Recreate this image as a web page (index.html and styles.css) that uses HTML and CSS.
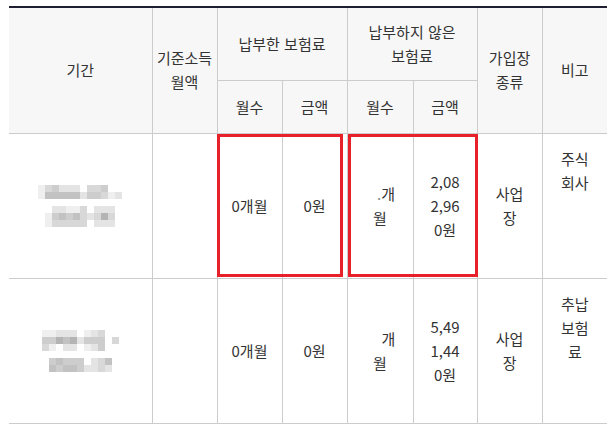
FILE: index.html
```html
<!DOCTYPE html>
<html lang="ko">
<head>
<meta charset="utf-8">
<link rel="stylesheet" href="styles.css">
</head>
<body>
<div class="wrap">
  <table class="grid">
    <colgroup>
      <col class="c-period"><col class="c-std"><col class="c-std"><col class="c-std"><col class="c-wide"><col class="c-narrow"><col class="c-std"><col class="c-std">
    </colgroup>
    <thead>
      <tr class="h1">
        <th rowspan="2">기간</th>
        <th rowspan="2">기준소득<br>월액</th>
        <th colspan="2">납부한 보험료</th>
        <th colspan="2">납부하지 않은<br>보험료</th>
        <th rowspan="2" class="narrowth">가입장 종류</th>
        <th rowspan="2">비고</th>
      </tr>
      <tr class="h2">
        <th>월수</th>
        <th>금액</th>
        <th>월수</th>
        <th>금액</th>
      </tr>
    </thead>
    <tbody>
      <tr class="row">
        <td>
          <div class="mosaic">
            <div class="mline">
              <div class="mrow"><i class="f"></i><i class="d"></i><i class="c"></i><i class="e"></i><i class="e"></i><i class="e"></i><i class="w"></i><i class="d"></i><i class="d"></i><i class="c"></i><i class="w"></i><i class="w"></i></div>
              <div class="mrow"><i class="f"></i><i class="b"></i><i class="b"></i><i class="b"></i><i class="b"></i><i class="b"></i><i class="e"></i><i class="c"></i><i class="c"></i><i class="d"></i><i class="f"></i><i class="e"></i></div>
            </div>
            <div class="mline">
              <div class="mrow"><i class="w"></i><i class="e"></i><i class="e"></i><i class="f"></i><i class="f"></i><i class="d"></i><i class="w"></i><i class="e"></i><i class="e"></i><i class="e"></i></div>
              <div class="mrow"><i class="f"></i><i class="c"></i><i class="b"></i><i class="c"></i><i class="b"></i><i class="d"></i><i class="e"></i><i class="d"></i><i class="a"></i><i class="d"></i></div>
              <div class="mrow"><i class="f"></i><i class="d"></i><i class="d"></i><i class="d"></i><i class="d"></i><i class="d"></i><i class="w"></i><i class="e"></i><i class="e"></i><i class="e"></i></div>
            </div>
          </div>
        </td>
        <td></td>
        <td>0개월</td>
        <td>0원</td>
        <td><div class="months"><div class="mline1"><span class="gap-s"></span><span class="dot">.</span>개</div><div>월</div></div></td>
        <td>2,082,960원</td>
        <td>사업장</td>
        <td class="note"><div class="notetext">주식회사</div></td>
      </tr>
      <tr class="row">
        <td>
          <div class="mosaic">
            <div class="mline">
              <div class="mrow"><i class="f"></i><i class="f"></i><i class="e"></i><i class="e"></i><i class="e"></i><i class="w"></i><i class="f"></i><i class="e"></i><i class="d"></i><i class="w"></i><i class="w"></i></div>
              <div class="mrow"><i class="c"></i><i class="c"></i><i class="a"></i><i class="b"></i><i class="a"></i><i class="e"></i><i class="c"></i><i class="c"></i><i class="c"></i><i class="w"></i><i class="d"></i></div>
              <div class="mrow"><i class="d"></i><i class="f"></i><i class="w"></i><i class="e"></i><i class="e"></i><i class="w"></i><i class="f"></i><i class="e"></i><i class="c"></i><i class="w"></i><i class="w"></i></div>
            </div>
            <div class="mline">
              <div class="mrow"><i class="c"></i><i class="b"></i><i class="c"></i><i class="c"></i><i class="c"></i><i class="w"></i><i class="e"></i><i class="d"></i><i class="b"></i></div>
              <div class="mrow"><i class="b"></i><i class="c"></i><i class="b"></i><i class="b"></i><i class="c"></i><i class="e"></i><i class="e"></i><i class="d"></i><i class="e"></i></div>
            </div>
          </div>
        </td>
        <td></td>
        <td>0개월</td>
        <td>0원</td>
        <td><div class="months"><div class="mline1"><span class="gap-l"></span>개</div><div>월</div></div></td>
        <td>5,491,440원</td>
        <td>사업장</td>
        <td class="note"><div class="notetext">추납보험료</div></td>
      </tr>
    </tbody>
  </table>
  <div class="hl hl-paid"></div>
  <div class="hl hl-unpaid"></div>
</div>
</body>
</html>
```

FILE: styles.css
```css
body {
  margin: 0;
  background: #fff;
  font-family: "Noto Sans CJK KR", "Noto Sans", sans-serif;
  color: #333;
}

.wrap {
  position: relative;
  width: 598px;
  margin: 6px 0 0 9px;
}

.grid {
  width: 598px;
  border-collapse: collapse;
  table-layout: fixed;
  font-size: 15px;
  line-height: 24px;
  border-top: 2px solid #1f1f33;
  border-left: hidden;
  border-right: hidden;
}

.c-period { width: 143px; }
.c-std { width: 65px; }
.c-wide { width: 66px; }
.c-narrow { width: 64px; }

.grid th {
  background: #f7f7f7;
  font-weight: 400;
  color: #333;
  border: 1px solid #ccc;
  padding: 0 2px;
  text-align: center;
  vertical-align: middle;
}

.grid th.narrowth {
  padding: 0 8px;
}

.h1 { height: 73px; }
.h2 { height: 53px; }
.row { height: 145px; }

.grid td {
  border: 1px solid #ccc;
  padding: 0 14px;
  text-align: center;
  vertical-align: middle;
  word-break: break-all;
}

.grid td.note {
  vertical-align: top;
  padding-top: 13px;
}

.notetext {
  width: 32px;
  margin: 0 auto;
}

.months {
  display: flex;
  flex-direction: column;
  align-items: center;
}

.mline1 {
  display: flex;
  align-items: baseline;
}

.gap-s { display: inline-block; width: 12px; }
.gap-l { display: inline-block; width: 17px; }
.dot { color: #888; }

.mosaic {
  display: flex;
  flex-direction: column;
  align-items: center;
  gap: 7px;
}

.mrow { display: flex; }
.mrow i { display: block; width: 7px; height: 7px; }
.mrow .a { background: #b4b4b4; }
.mrow .b { background: #c2c2c2; }
.mrow .c { background: #cdcdcd; }
.mrow .d { background: #d8d8d8; }
.mrow .e { background: #e4e4e4; }
.mrow .f { background: #efefef; }
.mrow .w { background: transparent; }

.hl {
  position: absolute;
  box-sizing: border-box;
  border: 3px solid #e8202a;
  top: 128px;
  height: 143px;
}

.hl-paid { left: 208px; width: 126px; }
.hl-unpaid { left: 339px; width: 130px; }
```
